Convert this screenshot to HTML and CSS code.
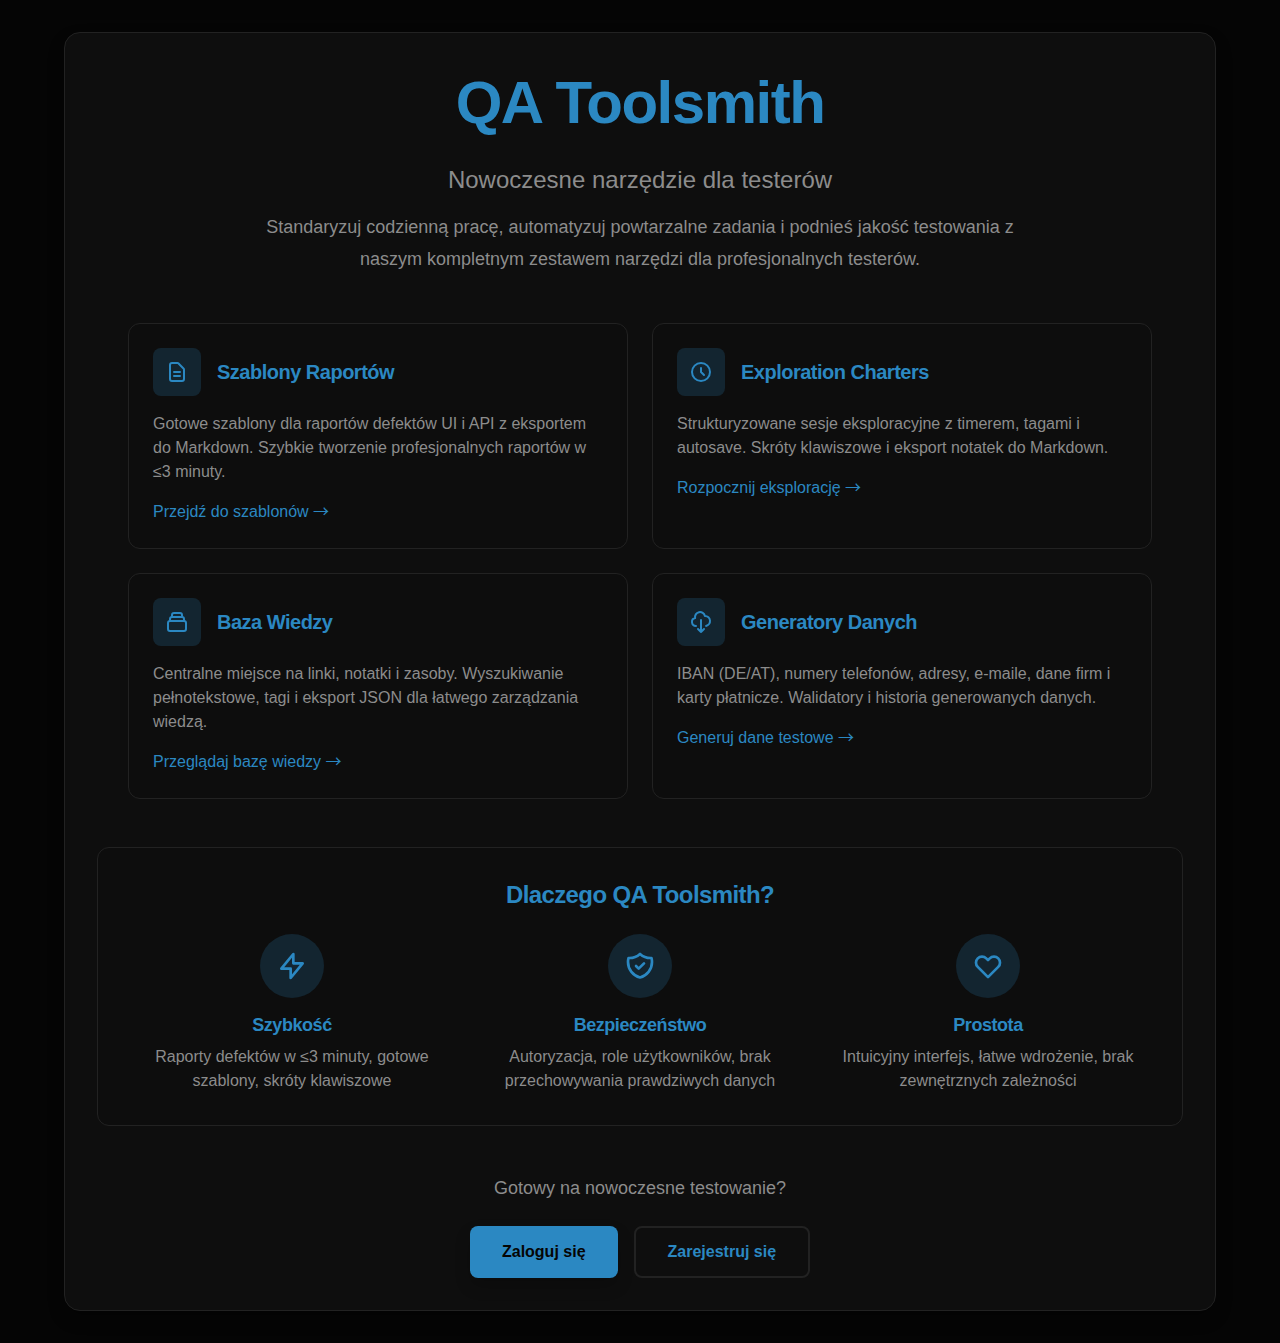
FILE: index.html
```html
<!DOCTYPE html>
<html lang="pl">
<head>
<meta charset="utf-8">
<title>QA Toolsmith</title>
<link rel="stylesheet" href="styles.css">
</head>
<body>
<main class="panel">
  <header class="hero">
    <h1>QA Toolsmith</h1>
    <p class="subtitle">Nowoczesne narzędzie dla testerów</p>
    <p class="lead">Standaryzuj codzienną pracę, automatyzuj powtarzalne zadania i podnieś jakość testowania z naszym kompletnym zestawem narzędzi dla profesjonalnych testerów.</p>
  </header>

  <section class="cards">
    <article class="card">
      <div class="card-head">
        <span class="tile"><svg class="icon" viewBox="0 0 24 24"><path d="M9 12h6m-6 4h6m2 5H7a2 2 0 01-2-2V5a2 2 0 012-2h5.586a1 1 0 01.707.293l5.414 5.414a1 1 0 01.293.707V19a2 2 0 01-2 2z"/></svg></span>
        <h3>Szablony Raportów</h3>
      </div>
      <p>Gotowe szablony dla raportów defektów UI i API z eksportem do Markdown. Szybkie tworzenie profesjonalnych raportów w ≤3 minuty.</p>
      <a href="#">Przejdź do szablonów <span class="arrow">→</span></a>
    </article>
    <article class="card">
      <div class="card-head">
        <span class="tile"><svg class="icon" viewBox="0 0 24 24"><path d="M12 8v4l3 3m6-3a9 9 0 11-18 0 9 9 0 0118 0z"/></svg></span>
        <h3>Exploration Charters</h3>
      </div>
      <p>Strukturyzowane sesje eksploracyjne z timerem, tagami i autosave. Skróty klawiszowe i eksport notatek do Markdown.</p>
      <a href="#">Rozpocznij eksplorację <span class="arrow">→</span></a>
    </article>
    <article class="card">
      <div class="card-head">
        <span class="tile"><svg class="icon" viewBox="0 0 24 24"><path d="M19 11H5m14 0a2 2 0 012 2v6a2 2 0 01-2 2H5a2 2 0 01-2-2v-6a2 2 0 012-2m14 0V9a2 2 0 00-2-2M5 11V9a2 2 0 012-2m0 0V5a2 2 0 012-2h6a2 2 0 012 2v2M7 7h10"/></svg></span>
        <h3>Baza Wiedzy</h3>
      </div>
      <p>Centralne miejsce na linki, notatki i zasoby. Wyszukiwanie pełnotekstowe, tagi i eksport JSON dla łatwego zarządzania wiedzą.</p>
      <a href="#">Przeglądaj bazę wiedzy <span class="arrow">→</span></a>
    </article>
    <article class="card">
      <div class="card-head">
        <span class="tile"><svg class="icon" viewBox="0 0 24 24"><path d="M7 16a4 4 0 01-.88-7.903A5 5 0 1115.9 6L16 6a5 5 0 011 9.9M9 19l3 3m0 0l3-3m-3 3V10"/></svg></span>
        <h3>Generatory Danych</h3>
      </div>
      <p>IBAN (DE/AT), numery telefonów, adresy, e-maile, dane firm i karty płatnicze. Walidatory i historia generowanych danych.</p>
      <a href="#">Generuj dane testowe <span class="arrow">→</span></a>
    </article>
  </section>

  <section class="why">
    <h2>Dlaczego QA Toolsmith?</h2>
    <div class="benefits">
      <div class="benefit">
        <span class="disc"><svg class="icon" viewBox="0 0 24 24"><path d="M13 10V3L4 14h7v7l9-11h-7z"/></svg></span>
        <h4>Szybkość</h4>
        <p>Raporty defektów w ≤3 minuty, gotowe szablony, skróty klawiszowe</p>
      </div>
      <div class="benefit">
        <span class="disc"><svg class="icon" viewBox="0 0 24 24"><path d="M9 12l2 2 4-4m5.618-4.016A11.955 11.955 0 0112 2.944a11.955 11.955 0 01-8.618 3.04A12.02 12.02 0 003 9c0 5.591 3.824 10.29 9 11.622 5.176-1.332 9-6.03 9-11.622 0-1.042-.133-2.052-.382-3.016z"/></svg></span>
        <h4>Bezpieczeństwo</h4>
        <p>Autoryzacja, role użytkowników, brak przechowywania prawdziwych danych</p>
      </div>
      <div class="benefit">
        <span class="disc"><svg class="icon" viewBox="0 0 24 24"><path d="M4.318 6.318a4.5 4.5 0 000 6.364L12 20.364l7.682-7.682a4.5 4.5 0 00-6.364-6.364L12 7.636l-1.318-1.318a4.5 4.5 0 00-6.364 0z"/></svg></span>
        <h4>Prostota</h4>
        <p>Intuicyjny interfejs, łatwe wdrożenie, brak zewnętrznych zależności</p>
      </div>
    </div>
  </section>

  <section class="cta">
    <p>Gotowy na nowoczesne testowanie?</p>
    <div class="actions">
      <a class="btn btn-primary" href="#">Zaloguj się</a>
      <a class="btn btn-outline" href="#">Zarejestruj się</a>
    </div>
  </section>
</main>
</body>
</html>
```

FILE: styles.css
```css
:root {
  --bg: #050505;
  --surface: #0e0e0e;
  --card: #0d0d0d;
  --border: #222;
  --muted: #8c8c8c;
  --primary: #2b88c2;
  --tint: #132530;
}

* { box-sizing: border-box; margin: 0; }

body {
  padding: 32px 64px;
  background: var(--bg);
  color: var(--muted);
  font: 16px/24px Arial, "Liberation Sans", sans-serif;
}

a { color: var(--primary); text-decoration: none; }

h1, h2, h3, h4 {
  color: var(--primary);
  line-height: 1.25;
  letter-spacing: -0.025em;
  font-weight: 600;
}

.panel {
  padding: 32px;
  background: var(--surface);
  border: 1px solid var(--border);
  border-radius: 16px;
  box-shadow: 0 8px 16px rgba(0, 0, 0, 0.3);
}

.hero { text-align: center; }
.hero h1 { font-size: 60px; font-weight: 700; margin-bottom: 24px; }
.subtitle { font-size: 24px; line-height: 32px; margin-bottom: 16px; }
.lead { max-width: 768px; margin: 0 auto; font-size: 18px; line-height: 1.75; }

.cards {
  display: grid;
  grid-template-columns: 1fr 1fr;
  gap: 24px;
  max-width: 1024px;
  margin: 48px auto;
}

.card {
  padding: 24px;
  background: var(--card);
  border: 1px solid var(--border);
  border-radius: 12px;
}

.card-head { display: flex; align-items: center; gap: 16px; margin-bottom: 16px; }
.card h3 { font-size: 20px; }
.card p { margin-bottom: 16px; }
.arrow { font-family: "Noto Sans CJK JP", sans-serif; line-height: 0; }

.icon {
  display: block;
  width: 24px;
  height: 24px;
  fill: none;
  stroke: var(--primary);
  stroke-width: 2;
  stroke-linecap: round;
  stroke-linejoin: round;
}

.tile, .disc {
  display: flex;
  align-items: center;
  justify-content: center;
  background: var(--tint);
}
.tile { width: 48px; height: 48px; border-radius: 8px; }
.disc { width: 64px; height: 64px; border-radius: 50%; margin: 0 auto 16px; }
.disc .icon { width: 32px; height: 32px; }

.why {
  padding: 32px;
  background: var(--card);
  border: 1px solid var(--border);
  border-radius: 12px;
  text-align: center;
}
.why h2 { font-size: 24px; margin-bottom: 24px; }
.benefits { display: grid; grid-template-columns: repeat(3, 1fr); gap: 24px; }
.benefit h4 { font-size: 18px; margin-bottom: 8px; }

.cta { margin-top: 48px; text-align: center; }
.cta p { font-size: 18px; line-height: 28px; margin-bottom: 24px; }
.actions { display: flex; justify-content: center; gap: 16px; }

.btn { padding: 14px 32px; border-radius: 8px; font-weight: 600; }
.btn-primary {
  background: var(--primary);
  color: #050505;
  box-shadow: 0 8px 16px rgba(0, 0, 0, 0.2);
}
.btn-outline { padding: 12px 32px; border: 2px solid var(--border); }
```
